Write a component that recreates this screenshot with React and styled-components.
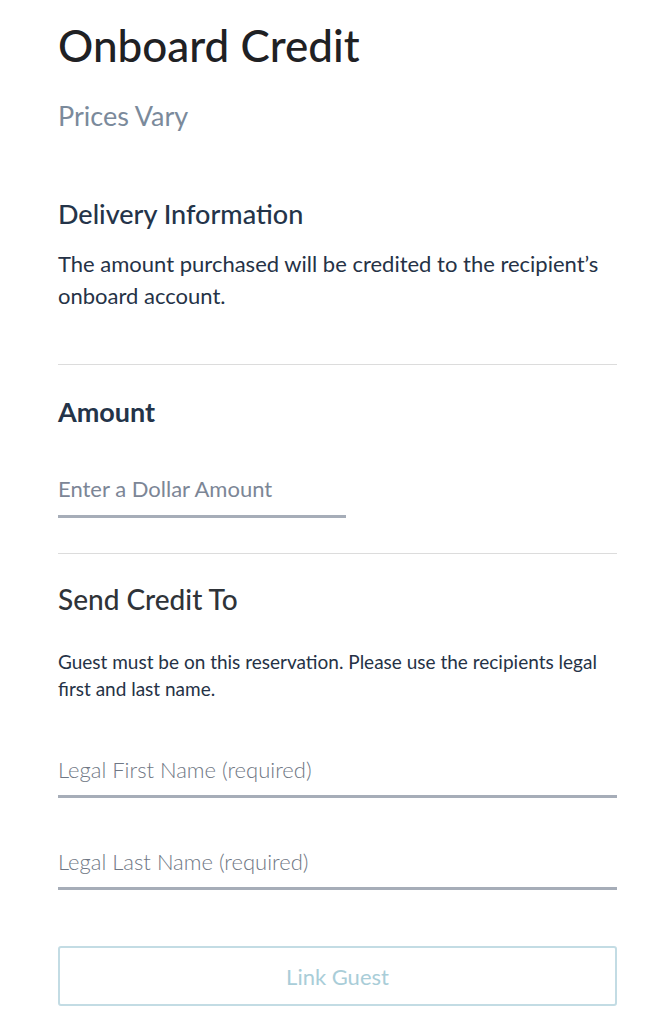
import React from "react";
import styled, { createGlobalStyle } from "styled-components";

const GlobalStyle = createGlobalStyle`
  * { box-sizing: border-box; }
  body {
    margin: 0;
    background: #fff;
    font-family: Lato, "Open Sans", sans-serif;
  }
`;

const Page = styled.div`
  padding: 19px 32px 0 58px;
  width: 649px;
`;

const Title = styled.h1`
  margin: 0;
  font-size: 44px;
  line-height: 52px;
  font-weight: 500;
  color: #1f2124;
`;

const Subtitle = styled.div`
  margin-top: 29px;
  font-size: 27px;
  line-height: 32px;
  color: #7b8a9b;
`;

const Section = styled.section`
  padding: ${(p) => p.$pad || "0"};
  border-bottom: ${(p) => (p.$divider ? "1px solid #dcdcdc" : "none")};
`;

const Heading = styled.h2`
  margin: 0;
  font-size: ${(p) => p.$size || "27px"};
  line-height: 32px;
  font-weight: ${(p) => (p.$bold ? 700 : 500)};
  color: ${(p) => p.$color || "#243449"};
`;

const Body = styled.p`
  margin: ${(p) => p.$mt || "18px"} 0 0;
  font-size: ${(p) => p.$size || "22px"};
  line-height: ${(p) => p.$lh || "32px"};
  color: #253246;
`;

const Field = styled.label`
  display: block;
  width: ${(p) => p.$width || "100%"};
  margin-top: ${(p) => p.$mt || "0"};
  border-bottom: 3px solid #a6adb8;
  padding-bottom: ${(p) => p.$pb || "11px"};
`;

const Input = styled.input`
  display: block;
  width: 100%;
  height: 28px;
  border: none;
  outline: none;
  padding: 0;
  background: transparent;
  font-family: inherit;
  font-size: 22px;
  line-height: 28px;
  color: #253246;

  &::placeholder {
    color: ${(p) => p.$ph || "#6f7784"};
    font-weight: ${(p) => p.$phWeight || 300};
  }
`;

const Button = styled.button`
  display: block;
  width: 100%;
  height: 60px;
  margin-top: 56px;
  background: #fff;
  border: 2px solid #c3dce4;
  border-radius: 3px;
  font-family: inherit;
  font-size: 22px;
  color: #a9cdd8;
  cursor: not-allowed;
`;

export default function App() {
  return (
    <>
      <GlobalStyle />
      <Page>
        <Title>Onboard Credit</Title>
        <Subtitle>Prices Vary</Subtitle>

        <Section $pad="66px 0 52px" $divider>
          <Heading>Delivery Information</Heading>
          <Body>
            The amount purchased will be credited to the recipient’s onboard
            account.
          </Body>
        </Section>

        <Section $pad="31px 0 35px" $divider>
          <Heading $bold>Amount</Heading>
          <Field $width="288px" $mt="47px" $pb="12px">
            <Input
              placeholder="Enter a Dollar Amount"
              $ph="#7c8696"
              $phWeight={400}
            />
          </Field>
        </Section>

        <Section $pad="29px 0 0">
          <Heading $size="28px" $color="#2f3338">
            Send Credit To
          </Heading>
          <Body $mt="33px" $size="19px" $lh="27px">
            Guest must be on this reservation. Please use the recipients legal
            first and last name.
          </Body>
          <Field $mt="54px">
            <Input placeholder="Legal First Name (required)" />
          </Field>
          <Field $mt="50px">
            <Input placeholder="Legal Last Name (required)" />
          </Field>
          <Button disabled>Link Guest</Button>
        </Section>
      </Page>
    </>
  );
}
